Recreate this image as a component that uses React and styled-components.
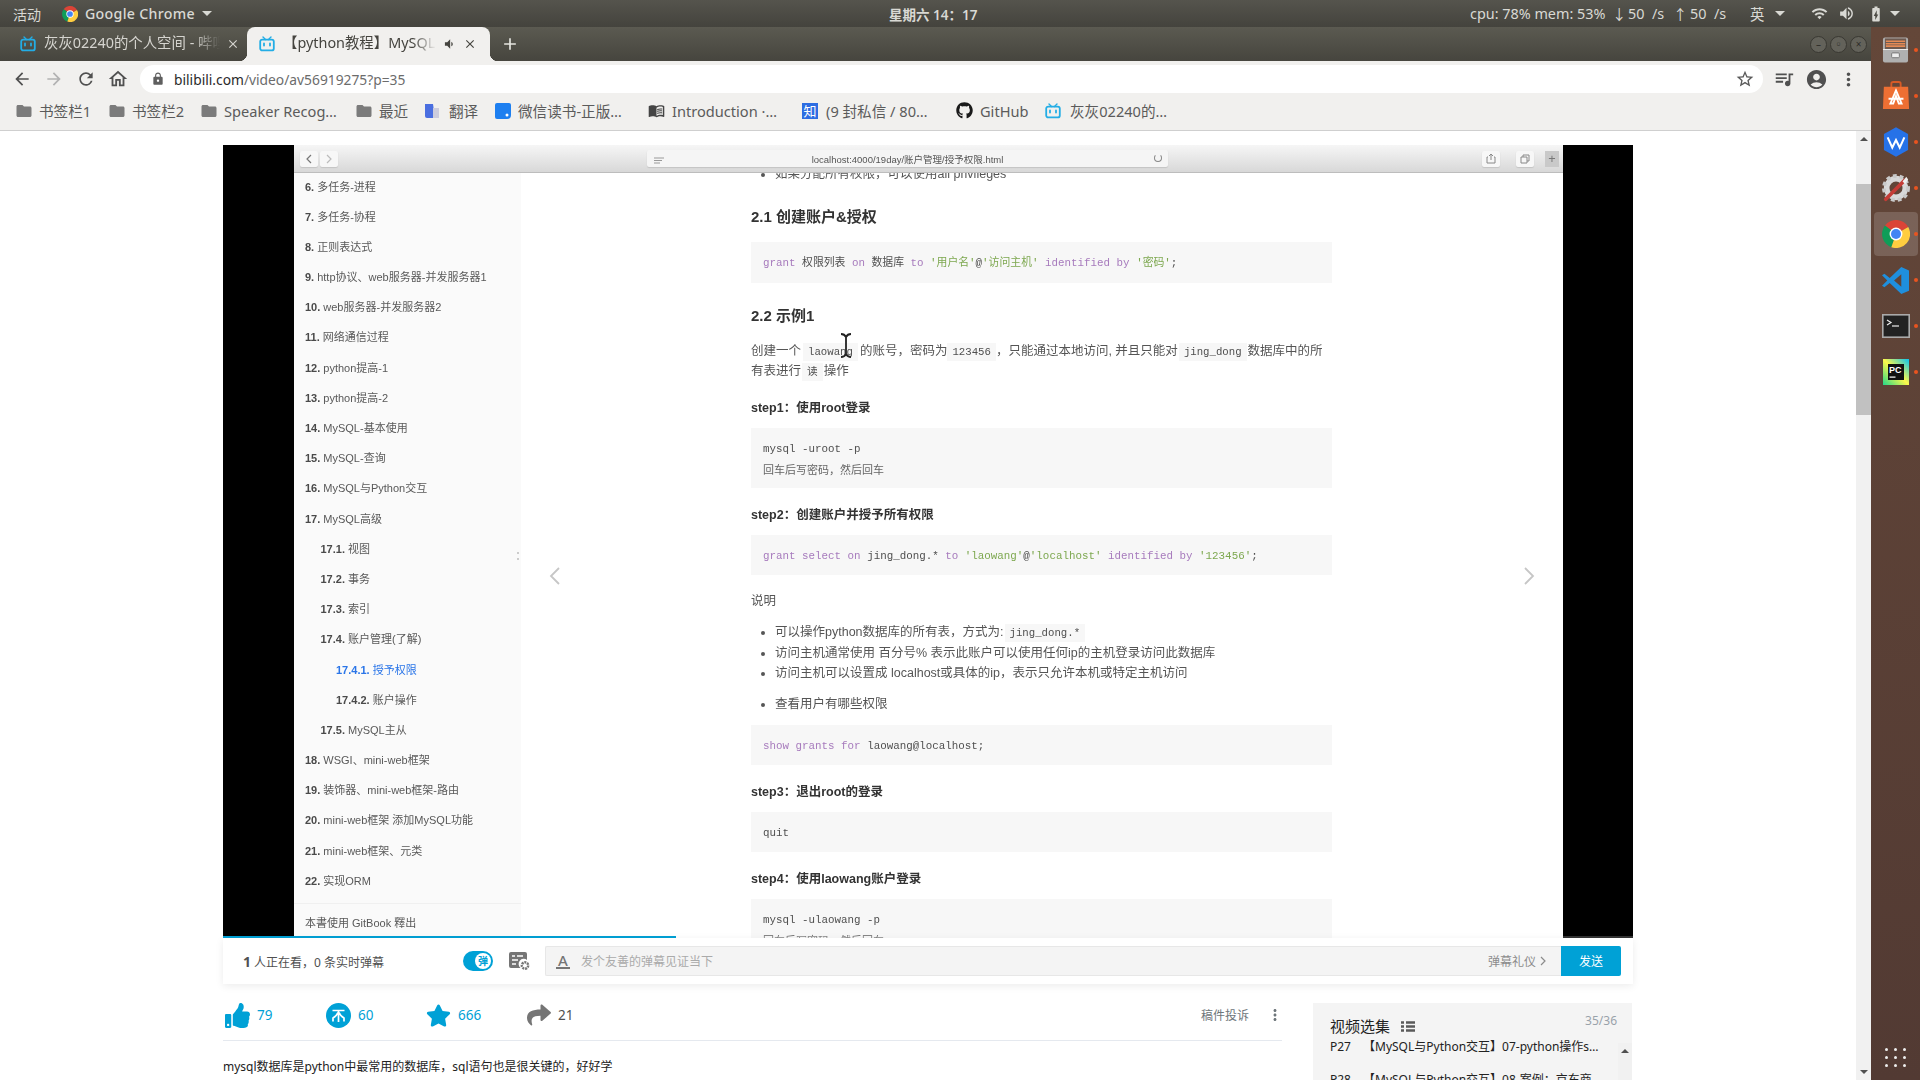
import React from 'react';
import styled, { createGlobalStyle } from 'styled-components';
import { FaThumbsUp, FaStar, FaShare, FaGithub } from 'react-icons/fa';
import { MdArrowBack, MdArrowForward, MdRefresh, MdOutlineHome, MdLock, MdStarBorder, MdQueueMusic, MdAccountCircle, MdMoreVert, MdWifi, MdVolumeUp, MdBatteryChargingFull, MdFolder, MdVolumeDown, MdClose, MdAdd, MdMenuBook } from 'react-icons/md';

const ui = '"Noto Sans", "Noto Sans CJK SC", sans-serif';
const mono = '"Liberation Mono", "Noto Sans CJK SC", monospace';
const doc = '"Liberation Sans", "Noto Sans CJK SC", sans-serif';
const blue = '#00a1d6';

const Global = createGlobalStyle`
  html, body { margin: 0; padding: 0; background: #fff; overflow: hidden; }
  * { box-sizing: border-box; }
  #root { width: 1920px; height: 1080px; }
`;

const Desktop = styled.div`width:1920px;height:1080px;display:flex;flex-direction:column;overflow:hidden;font-family:${ui};`;
const TopBar = styled.header`height:27px;flex:none;display:flex;align-items:center;background:linear-gradient(#55544d,#44433d);color:#d9d9d4;font-size:14px;padding-left:13px;`;
const Activities = styled.span`width:49px;flex:none;`;
const AppMenu = styled.div`width:827px;flex:none;display:flex;align-items:center;gap:7px;font-weight:500;letter-spacing:.3px;font-size:14.2px;`;
const Caret = styled.i`display:inline-block;width:0;height:0;border-left:5px solid transparent;border-right:5px solid transparent;border-top:5px solid #d9d9d4;`;
const Clock = styled.span`width:130px;flex:none;font-weight:600;font-size:13.5px;`;
const Tray = styled.div`margin-left:451px;flex:none;display:flex;align-items:center;white-space:pre;font-size:14.4px;width:450px;`;
const Stat = styled.span`width:${p => p.$w}px;flex:none;`;
const TrayIcon = styled.span`width:${p => p.$w}px;flex:none;display:flex;align-items:center;justify-content:flex-start;`;

const Body = styled.div`flex:1;display:flex;min-height:0;`;
const Browser = styled.div`width:1871px;flex:none;display:flex;flex-direction:column;min-height:0;`;
const TabStrip = styled.div`height:34px;flex:none;display:flex;align-items:flex-end;padding-left:15px;background:linear-gradient(#5b5a51,#46453e);position:relative;`;
const Tab = styled.div`
  position:relative;width:${p => p.$w}px;height:34px;flex:none;display:flex;align-items:center;font-size:14.4px;padding-left:${p => p.$pad}px;
  color:${p => p.$active ? '#45443f' : '#d5d4cf'};background:${p => p.$active ? '#f1f0ee' : 'transparent'};border-radius:8px 8px 0 0;white-space:nowrap;
  ${p => p.$active && `
    &::before,&::after{content:'';position:absolute;bottom:0;width:8px;height:8px;}
    &::before{left:-8px;background:radial-gradient(circle at 0 0,transparent 8px,#f1f0ee 8.5px);}
    &::after{right:-8px;background:radial-gradient(circle at 100% 0,transparent 8px,#f1f0ee 8.5px);}
  `}
`;
const TabTitle = styled.span`
  width:${p => p.$w}px;flex:none;overflow:hidden;margin-left:${p => p.$gap}px;line-height:20px;margin-bottom:2px;
  -webkit-mask-image:linear-gradient(to right,#000 85%,transparent);mask-image:linear-gradient(to right,#000 85%,transparent);
`;
const TabClose = styled(MdClose)`flex:none;margin-left:${p => p.$m}px;`;
const TabSound = styled(MdVolumeDown)`flex:none;margin-left:6px;`;
const NewTab = styled.div`margin-left:10px;height:34px;display:flex;align-items:center;color:#e5e5e0;`;
const WindowButtons = styled.div`margin-left:auto;margin-right:4px;display:flex;gap:3px;height:34px;align-items:center;`;
const WinBtn = styled.span`width:17px;height:17px;border-radius:50%;background:#63625a;border:1px solid #393832;display:flex;align-items:center;justify-content:center;color:#2e2d29;font-size:10px;line-height:1;`;

const Toolbar = styled.div`height:32px;flex:none;background:#f1f0ee;display:flex;align-items:flex-end;padding-left:6px;padding-right:10px;`;
const NavIcon = styled.span`width:32px;height:28px;flex:none;display:flex;align-items:center;justify-content:center;color:${p => p.$dim ? '#b2b2b2' : '#505050'};`;
const Omni = styled.div`margin-left:6px;width:1623px;height:28px;flex:none;background:#fff;border-radius:14px;display:flex;align-items:center;padding-left:11px;font-size:13.8px;`;
const Url = styled.span`margin-left:9px;color:#6c6c6c;white-space:nowrap;& b{font-weight:400;color:#2a2a2a;}`;
const StarIcon = styled.span`margin-left:auto;margin-right:8px;color:#5a5a5a;display:flex;`;
const RightTools = styled.div`margin-left:5px;display:flex;`;

const Bookmarks = styled.div`height:38px;flex:none;background:#f1f0ee;border-bottom:1px solid #cfcfcf;display:flex;align-items:center;padding:0 0 2px 15px;`;
const Bookmark = styled.div`width:${p => p.$w}px;flex:none;display:flex;align-items:center;gap:${p => p.$gap || 6}px;font-size:14.6px;color:#5b5b5b;white-space:nowrap;`;
const ZhiIcon = styled.span`width:16px;height:16px;background:#2d6de2;color:#fff;font-size:13px;line-height:16px;text-align:center;flex:none;`;

const Content = styled.div`flex:1;display:flex;min-height:0;background:#fff;`;
const Page = styled.main`flex:1;min-width:0;padding:14px 0 0 223px;overflow:hidden;`;
const Player = styled.section`width:1410px;`;
const Video = styled.div`height:793px;background:#000;display:flex;position:relative;padding:0 70px 0 71px;`;
const Progress = styled.div`position:absolute;left:0;right:0;bottom:0;height:2px;background:rgba(255,255,255,.2);&::after{content:'';position:absolute;left:0;top:0;bottom:0;width:453px;background:${blue};}`;
const Screen = styled.div`width:1269px;height:793px;background:#fff;display:flex;flex-direction:column;overflow:hidden;position:relative;filter:blur(.35px);`;

const MacBar = styled.div`height:28px;flex:none;background:linear-gradient(#f6f6f6,#d8d8d8);border-bottom:1px solid #bdbdbd;display:flex;align-items:center;padding-left:6px;position:relative;z-index:1;`;
const MacBtn = styled.span`width:18px;height:16px;flex:none;margin-right:2px;background:#f7f7f7;border-radius:2px;box-shadow:0 1px 1px #c4c4c4;display:flex;align-items:center;justify-content:center;color:${p => p.$c || '#777'};`;
const MacAddress = styled.div`margin-left:307px;width:521px;height:17px;flex:none;background:#f5f5f5;border-radius:2px;box-shadow:0 1px 1px #c4c4c4;display:flex;align-items:center;justify-content:center;position:relative;font:9.5px ${doc};color:#555;`;
const MacMenu = styled.span`position:absolute;left:7px;top:5px;`;
const MacReload = styled.span`position:absolute;right:6px;top:4px;width:8px;height:8px;border:1px solid #888;border-top-color:transparent;border-radius:50%;`;
const MacRight = styled.div`margin-left:314px;display:flex;gap:14px;`;
const MacPlus = styled.span`margin-left:9px;width:14px;height:16px;background:#c9c9c9;color:#777;font-size:13px;line-height:15px;text-align:center;`;

const Split = styled.div`flex:1;min-height:0;display:flex;overflow:hidden;position:relative;`;
const Side = styled.aside`width:227px;flex:none;background:#fafafa;display:flex;flex-direction:column;font:11px/30.2px ${doc};color:#585858;position:relative;`;
const SideList = styled.ul`list-style:none;margin:-1.5px 0 0;padding:0;flex:none;`;
const SideItem = styled.li`height:30.2px;white-space:nowrap;padding-left:${p => 11 + p.$level * 15.5}px;color:${p => p.$on ? '#2a75e8' : 'inherit'};& b{color:${p => p.$on ? '#2a75e8' : '#4a4a4a'};margin-right:3px;}`;
const SideFoot = styled.div`margin-top:7px;border-top:1px solid #f0f0f0;padding-left:11px;height:38px;line-height:38px;`;
const Grip = styled.span`position:absolute;left:223px;top:379px;width:2px;height:8px;border-top:2px dotted #ccc;border-bottom:2px dotted #ccc;`;

const Article = styled.article`flex:1;min-width:0;overflow:hidden;padding-left:230px;font:12.5px/20px ${doc};color:#555;position:relative;`;
const Inner = styled.div`width:581px;margin-top:-9px;`;
const H2 = styled.h2`margin:${p => p.$mt}px 0 0;font:700 15px/20px ${doc};color:#333;`;
const Strong = styled.p`margin:${p => p.$mt}px 0 0;font-weight:700;color:#333;line-height:20px;`;
const Code = styled.pre`margin:${p => p.$mt}px 0 0;background:#f7f7f7;padding:11px 12px 0;height:${p => p.$h}px;font:10.85px/20.5px ${mono};color:#4f4f4f;overflow:hidden;white-space:pre;`;
const CodeNote = styled.span`font-family:${doc};font-size:11px;color:#666;`;
const Kw = styled.span`color:#a77bbd;`;
const Str = styled.span`color:#7da84f;`;
const Para = styled.p`margin:${p => p.$mt}px 0 0;line-height:20px;`;
const Inline = styled.code`font:10.7px ${mono};background:#f7f7f7;padding:3px 5px;color:#4f4f4f;margin:0 ${p => p.$m ?? 1}px;`;
const List = styled.ul`margin:${p => p.$mt}px 0 0;padding:0 0 0 24px;line-height:20.4px;`;
const Chevron = styled.span`position:absolute;top:394px;${p => p.$flip ? 'right:28px;transform:scaleX(-1);' : 'left:28px;'}color:#c6c6c6;display:flex;`;
const Cursor = styled.svg`position:absolute;left:318px;top:160px;`;

const SendBar = styled.div`height:46px;background:#fff;box-shadow:0 2px 8px rgba(0,0,0,.08);display:flex;align-items:center;padding:0 12px 0 20px;position:relative;`;
const Watch = styled.div`width:220px;flex:none;font-size:12px;color:#505050;& b{font-size:14px;margin-right:3px;font-weight:700;}`;
const Toggle = styled.div`width:30px;height:20px;flex:none;border-radius:10px;background:${blue};display:flex;align-items:center;justify-content:flex-end;padding-right:2px;`;
const Knob = styled.span`width:16px;height:16px;border-radius:50%;background:#fff;color:${blue};font-size:10px;line-height:16px;text-align:center;font-weight:700;`;
const DmSet = styled.span`margin-left:16px;flex:none;display:flex;`;
const Input = styled.div`margin-left:15px;flex:1;height:30px;background:#f4f4f4;border:1px solid #e7e7e7;border-right:0;border-radius:2px 0 0 2px;display:flex;align-items:center;padding:0 14px 0 10px;font-size:12px;color:#aaa;`;
const FontA = styled.span`width:14px;flex:none;color:#757575;font-size:15px;line-height:14px;text-align:center;border-bottom:2px solid #757575;margin-right:11px;font-weight:500;`;
const Etiquette = styled.span`margin-left:auto;color:#8c8c8c;display:flex;align-items:center;gap:3px;`;
const Send = styled.button`width:60px;height:30px;flex:none;border:0;background:${blue};color:#fff;font:12px ${ui};border-radius:0 2px 2px 0;padding:0;`;

const Below = styled.div`display:flex;gap:31px;`;
const LeftCol = styled.div`width:1059px;flex:none;`;
const Actions = styled.div`height:57px;border-bottom:1px solid #e5e9ef;display:flex;align-items:center;padding:6px 0 0 2px;`;
const Action = styled.div`width:${p => p.$w || 100}px;flex:none;display:flex;align-items:center;gap:7px;font-size:13.5px;color:${p => p.$c};`;
const ActIcon = styled.span`width:25px;height:26px;flex:none;display:flex;align-items:center;justify-content:center;color:${p => p.$c};`;
const Report = styled.div`margin-left:auto;display:flex;align-items:center;font-size:12px;color:#6d757a;margin-right:-2px;`;
const VDots = styled.span`margin-left:17px;display:flex;color:#6d757a;`;
const Desc = styled.p`margin:17px 0 0;font-size:12px;line-height:18px;color:#222;`;
const Panel = styled.aside`width:319px;flex:none;margin-top:19px;background:#f4f4f4;height:120px;padding:12px 0 0 17px;position:relative;`;
const PanelHead = styled.div`display:flex;align-items:center;gap:11px;font-size:15px;line-height:22px;color:#222;padding-right:15px;`;
const PanelCount = styled.span`margin-left:auto;font-size:12px;color:#99a2aa;margin-top:-10px;`;
const PartList = styled.ul`list-style:none;margin:1px 0 0;padding:0;font-size:12px;color:#222;`;
const Part = styled.li`height:33px;line-height:18px;display:flex;gap:12px;white-space:nowrap;`;
const PartBar = styled.span`position:absolute;right:0;top:40px;bottom:0;width:14px;background:#f1f1f1;&::after{content:'';position:absolute;left:3px;top:6px;border-left:4px solid transparent;border-right:4px solid transparent;border-bottom:4px solid #505050;}`;

const PageScroll = styled.div`width:15px;flex:none;background:#f1f1f1;display:flex;flex-direction:column;align-items:center;position:relative;`;
const Thumb = styled.div`position:absolute;top:53px;left:0;right:0;height:231px;background:#c1c1c1;`;
const ArrowUp = styled.i`margin-top:6px;border-left:4px solid transparent;border-right:4px solid transparent;border-bottom:4px solid #505050;`;
const ArrowDown = styled.i`margin-top:auto;margin-bottom:6px;border-left:4px solid transparent;border-right:4px solid transparent;border-top:4px solid #505050;`;

const Dock = styled.nav`width:49px;flex:none;background:linear-gradient(#644739,#523a33);display:flex;flex-direction:column;align-items:center;`;
const DockSlot = styled.div`width:44px;height:${p => p.$on ? 44 : 46}px;margin:${p => p.$on ? '1px 0' : '0'};flex:none;border-radius:4px;display:flex;align-items:center;justify-content:center;position:relative;background:${p => p.$on ? 'rgba(255,255,255,.16)' : 'transparent'};&::after{content:'';position:absolute;right:0;top:50%;width:4px;height:4px;margin-top:-2px;border-radius:50%;background:#e95420;}`;
const Grid = styled.div`margin-top:auto;margin-bottom:13px;display:grid;grid-template-columns:repeat(3,3px);gap:5px 6px;`;
const GridDot = styled.i`width:3px;height:3px;border-radius:50%;background:#eee;`;

const Bili = ({ s = 16 }) => (
  <svg width={s} height={s} viewBox="0 0 16 16" fill="none" style={{ flex: 'none' }}>
    <path d="M4 1l2.5 2.5M12 1L9.5 3.5" stroke="#23ade5" strokeWidth="1.4" strokeLinecap="round" />
    <rect x="1.2" y="3.6" width="13.6" height="10.8" rx="2" stroke="#23ade5" strokeWidth="1.8" />
    <path d="M5 7.5v2M11 7.5v2" stroke="#23ade5" strokeWidth="1.8" strokeLinecap="round" />
  </svg>
);
const ChromeLogo = ({ s = 16 }) => (
  <svg width={s} height={s} viewBox="0 0 48 48" style={{ flex: 'none' }}>
    <path d="M24 24L45 12A24 24 0 0 0 5 9.5z" fill="#db4437" />
    <path d="M24 24L5 9.5A24 24 0 0 0 16 46.6z" fill="#0f9d58" />
    <path d="M24 24L16 46.6A24 24 0 0 0 45 12z" fill="#ffcd40" />
    <circle cx="24" cy="24" r="11" fill="#fff" />
    <circle cx="24" cy="24" r="8.6" fill="#4285f4" />
  </svg>
);
const Coin = () => (
  <svg width="25" height="25" viewBox="0 0 25 25"><circle cx="12.5" cy="12.5" r="12.5" fill={blue} />
    <path d="M6.5 7.5h12M12.5 8v11M12 9.5c-1 2.5-2.5 4-5 5.5v3.5M13 9.5c1 2.5 2.5 4 5 5.5v3.5" stroke="#fff" strokeWidth="1.7" fill="none" /></svg>
);
const DmIcon = () => (
  <svg width="21" height="20" viewBox="0 0 21 20"><path d="M2 1h14a2 2 0 0 1 2 2v6a5 5 0 0 0-6.500 8H2a2 2 0 0 1-2-2V3a2 2 0 0 1 2-2z" fill="#757575" />
    <path d="M3 5h3M8 5h6M3 9h6M3 13h4" stroke="#fff" strokeWidth="1.6" />
    <circle cx="16" cy="14.5" r="3.2" fill="none" stroke="#757575" strokeWidth="2.4" strokeDasharray="2 .8" /></svg>
);
const IBeam = () => (
  <Cursor width="14" height="25" viewBox="0 0 14 25"><path d="M2 1c2 0 4 1 5 3 1-2 3-3 5-3M7 4v17M2 24c2 0 4-1 5-3 1 2 3 3 5 3" stroke="#222" strokeWidth="1.8" fill="none" /></Cursor>
);
const ChevronSvg = () => (
  <svg width="12" height="18" viewBox="0 0 12 18"><path d="M10 1L2 9l8 8" stroke="currentColor" strokeWidth="1.8" fill="none" /></svg>
);
const Small = ({ d, w = 8, h = 10 }) => (
  <svg width={w} height={h} viewBox="0 0 8 10"><path d={d} stroke="currentColor" strokeWidth="1.2" fill="none" /></svg>
);

const DockFile = () => (
  <svg width="27" height="28" viewBox="0 0 28 28"><rect x="1" y="1" width="26" height="26" rx="2" fill="#b0b0b0" /><rect x="3" y="2" width="22" height="11" fill="#6e5a50" /><path d="M4 5h20M4 7.500h20M4 10h20" stroke="#e58a55" strokeWidth="1.6" /><rect x="1" y="13" width="26" height="1" fill="#eee" /><rect x="10" y="17" width="8" height="5" rx="1" fill="#eee" stroke="#777" /></svg>
);
const DockStore = () => (
  <svg width="28" height="30" viewBox="0 0 30 32"><path d="M10 7V3a2 2 0 0 1 2-2h6a2 2 0 0 1 2 2v4" stroke="#d75a26" strokeWidth="2" fill="none" /><path d="M2 6h26l1 24H1z" fill="#ee6f33" /><path d="M15 10l-6 14h3l3-8 3 8h3zM7 19h16" stroke="#fff" strokeWidth="2" fill="none" /></svg>
);
const DockWps = () => (
  <svg width="26" height="30" viewBox="0 0 28 32"><path d="M14 0l13 7.500v17L14 32 1 24.500v-17z" fill="#2672e8" /><path d="M5 11l5 11 4-8 4 8 5-11" stroke="#fff" strokeWidth="2.2" fill="none" /></svg>
);
const DockGear = () => (
  <svg width="28" height="28" viewBox="0 0 30 30"><circle cx="15" cy="15" r="10" fill="none" stroke="#d8d8d8" strokeWidth="6" /><circle cx="15" cy="15" r="13" fill="none" stroke="#c9c9c9" strokeWidth="4" strokeDasharray="4 3.2" /><path d="M4 27L24 7" stroke="#c43c36" strokeWidth="4" strokeLinecap="round" /><path d="M22 8l4-5 2 3-3 5z" fill="#eee" /></svg>
);
const DockCode = () => (
  <svg width="27" height="27" viewBox="0 0 28 28"><path d="M20 0l8 3.500v21L20 28 8 16.500 2.500 21 0 19.500 5.500 14 0 8.500 2.500 7 8 11.500zM20 7.500L12.500 14l7.500 6.500z" fill="#1f8fdd" /></svg>
);
const DockTerm = () => (
  <svg width="28" height="24" viewBox="0 0 28 24"><rect x=".8" y=".8" width="26.400" height="22.400" fill="#222" stroke="#aaa" strokeWidth="1.600" /><path d="M5 6l4 2.500L5 11" stroke="#eee" strokeWidth="1.200" fill="none" /><path d="M10 12h7" stroke="#eee" strokeWidth="1.200" /></svg>
);
const DockPc = () => (
  <svg width="26" height="26" viewBox="0 0 26 26"><defs><linearGradient id="pc" x1="0" y1="1" x2="1" y2="0"><stop offset="0" stopColor="#21d789" /><stop offset=".5" stopColor="#fcf84a" /><stop offset="1" stopColor="#07c3f2" /></linearGradient></defs><rect width="26" height="26" fill="url(#pc)" /><rect x="5" y="5" width="16" height="16" fill="#111" /><text x="6" y="14" fill="#fff" fontSize="9" fontWeight="700" fontFamily="Liberation Sans">PC</text><rect x="6.500" y="17.500" width="6" height="1.200" fill="#fff" /></svg>
);

const bookmarks = [
  { w: 93, icon: <MdFolder size={18} color="#7b7b7b" />, t: '书签栏1' },
  { w: 92, icon: <MdFolder size={18} color="#7b7b7b" />, t: '书签栏2' },
  { w: 155, icon: <MdFolder size={18} color="#7b7b7b" />, t: 'Speaker Recog…' },
  { w: 69, icon: <MdFolder size={18} color="#7b7b7b" />, t: '最近' },
  { w: 71, icon: <svg width="16" height="16" viewBox="0 0 16 16"><path d="M1 1h8l2 14H3a2 2 0 0 1-2-2z" fill="#4a6ee0" /><path d="M9 5h6v10H9z" fill="#ccd" /></svg>, t: '翻译', gap: 9 },
  { w: 153, icon: <svg width="16" height="16" viewBox="0 0 16 16"><path d="M2 0h12a2 2 0 0 1 2 2v10a4 4 0 0 1-4 4H2a2 2 0 0 1-2-2V2a2 2 0 0 1 2-2z" fill="#1d7ff0" /><circle cx="12" cy="12" r="1.500" fill="#fff" /></svg>, t: '微信读书-正版…', gap: 7 },
  { w: 154, icon: <MdMenuBook size={17} color="#444" />, t: 'Introduction ·…', gap: 7 },
  { w: 154, icon: <ZhiIcon>知</ZhiIcon>, t: '(9 封私信 / 80…', gap: 8 },
  { w: 89, icon: <FaGithub size={17} color="#1a1a1a" />, t: 'GitHub', gap: 7 },
  { w: 140, icon: <Bili />, t: '灰灰02240的…', gap: 9 },
];

const toc = [
  [0, '6.', '多任务-进程'], [0, '7.', '多任务-协程'], [0, '8.', '正则表达式'], [0, '9.', 'http协议、web服务器-并发服务器1'],
  [0, '10.', 'web服务器-并发服务器2'], [0, '11.', '网络通信过程'], [0, '12.', 'python提高-1'], [0, '13.', 'python提高-2'],
  [0, '14.', 'MySQL-基本使用'], [0, '15.', 'MySQL-查询'], [0, '16.', 'MySQL与Python交互'], [0, '17.', 'MySQL高级'],
  [1, '17.1.', '视图'], [1, '17.2.', '事务'], [1, '17.3.', '索引'], [1, '17.4.', '账户管理(了解)'],
  [2, '17.4.1.', '授予权限', true], [2, '17.4.2.', '账户操作'], [1, '17.5.', 'MySQL主从'],
  [0, '18.', 'WSGI、mini-web框架'], [0, '19.', '装饰器、mini-web框架-路由'], [0, '20.', 'mini-web框架 添加MySQL功能'],
  [0, '21.', 'mini-web框架、元类'], [0, '22.', '实现ORM'],
];

export default function App() {
  return (
    <Desktop>
      <Global />
      <TopBar>
        <Activities>活动</Activities>
        <AppMenu><ChromeLogo /><span>Google Chrome</span><Caret /></AppMenu>
        <Clock>星期六 14：17</Clock>
        <Tray>
          <Stat $w={142}>cpu: 78% mem: 53%</Stat>
          <Stat $w={16}>↓</Stat><Stat $w={24}>50</Stat><Stat $w={21}>/s</Stat>
          <Stat $w={17}>↑</Stat><Stat $w={24}>50</Stat><Stat $w={36}>/s</Stat>
          <Stat $w={25}>英</Stat>
          <TrayIcon $w={36}><Caret /></TrayIcon>
          <TrayIcon $w={27}><MdWifi size={17} /></TrayIcon>
          <TrayIcon $w={29}><MdVolumeUp size={17} /></TrayIcon>
          <TrayIcon $w={23}><MdBatteryChargingFull size={18} /></TrayIcon>
          <TrayIcon $w={12}><Caret /></TrayIcon>
        </Tray>
      </TopBar>
      <Body>
        <Browser>
          <TabStrip>
            <Tab $w={232} $pad={5}>
              <Bili /><TabTitle $w={176} $gap={8}>灰灰02240的个人空间 - 哔哩哔哩</TabTitle>
              <TabClose size={14} $m={6} />
            </Tab>
            <Tab $w={243} $pad={12} $active>
              <Bili /><TabTitle $w={153} $gap={8}>【python教程】MySQL高级-账户管理</TabTitle>
              <TabSound size={14} />
              <TabClose size={14} $m={7} />
            </Tab>
            <NewTab><MdAdd size={20} /></NewTab>
            <WindowButtons><WinBtn>–</WinBtn><WinBtn>▫</WinBtn><WinBtn>×</WinBtn></WindowButtons>
          </TabStrip>
          <Toolbar>
            <NavIcon><MdArrowBack size={20} /></NavIcon>
            <NavIcon $dim><MdArrowForward size={20} /></NavIcon>
            <NavIcon><MdRefresh size={20} /></NavIcon>
            <NavIcon><MdOutlineHome size={22} /></NavIcon>
            <Omni>
              <MdLock size={14} color="#5f5f5f" />
              <Url><b>bilibili.com</b>/video/av56919275?p=35</Url>
              <StarIcon><MdStarBorder size={20} /></StarIcon>
            </Omni>
            <RightTools>
              <NavIcon><MdQueueMusic size={22} /></NavIcon>
              <NavIcon><MdAccountCircle size={23} /></NavIcon>
              <NavIcon><MdMoreVert size={21} /></NavIcon>
            </RightTools>
          </Toolbar>
          <Bookmarks>
            {bookmarks.map(b => <Bookmark key={b.t} $w={b.w} $gap={b.gap}>{b.icon}<span>{b.t}</span></Bookmark>)}
          </Bookmarks>
          <Content>
            <Page>
              <Player>
                <Video>
                  <Screen>
                    <MacBar>
                      <MacBtn><Small d="M6 1L2 5l4 4" /></MacBtn>
                      <MacBtn $c="#bbb"><Small d="M2 1l4 4-4 4" /></MacBtn>
                      <MacAddress>
                        <MacMenu><svg width="12" height="7" viewBox="0 0 12 7"><path d="M0 1h10M0 3.500h8M0 6h6" stroke="#999" /></svg></MacMenu>
                        localhost:4000/19day/账户管理/授予权限.html
                        <MacReload />
                      </MacAddress>
                      <MacRight>
                        <MacBtn><svg width="10" height="11" viewBox="0 0 10 11"><path d="M2 4H1v6h8V4H8M5 7V1M3 3l2-2 2 2" stroke="#888" fill="none" /></svg></MacBtn>
                        <MacBtn><svg width="10" height="10" viewBox="0 0 10 10"><path d="M1 3h6v6H1zM3 3V1h6v6H7" stroke="#888" fill="none" /></svg></MacBtn>
                      </MacRight>
                      <MacPlus>+</MacPlus>
                    </MacBar>
                    <Split>
                      <Side>
                        <SideList>
                          {toc.map(([l, n, t, on]) => <SideItem key={n} $level={l} $on={on}><b>{n}</b>{t}</SideItem>)}
                        </SideList>
                        <SideFoot>本書使用 GitBook 釋出</SideFoot>
                        <Grip />
                      </Side>
                      <Article>
                        <Inner>
                          <List $mt={0}><li>如果分配所有权限，可以使用all privileges</li></List>
                          <H2 $mt={23}>2.1 创建账户&amp;授权</H2>
                          <Code $mt={15} $h={41}><Kw>grant</Kw> 权限列表 <Kw>on</Kw> 数据库 <Kw>to</Kw> <Str>'用户名'</Str>@<Str>'访问主机'</Str> <Kw>identified by</Kw> <Str>'密码'</Str>;</Code>
                          <H2 $mt={23}>2.2 示例1</H2>
                          <Para $mt={15}>创建一个<Inline $m={2}>laowang</Inline>的账号，密码为<Inline $m={0}>123456</Inline>，只能通过本地访问, 并且只能对<Inline $m={1}>jing_dong</Inline>数据库中的所有表进行<Inline>读</Inline>操作</Para>
                          <Strong $mt={17}>step1：使用root登录</Strong>
                          <Code $mt={10} $h={60}>{'mysql -uroot -p\n'}<CodeNote>回车后写密码，然后回车</CodeNote></Code>
                          <Strong $mt={17}>step2：创建账户并授予所有权限</Strong>
                          <Code $mt={10} $h={40}><Kw>grant select on</Kw> jing_dong.* <Kw>to</Kw> <Str>'laowang'</Str>@<Str>'localhost'</Str> <Kw>identified by</Kw> <Str>'123456'</Str>;</Code>
                          <Para $mt={16}>说明</Para>
                          <List $mt={11}>
                            <li>可以操作python数据库的所有表，方式为:<Inline>jing_dong.*</Inline></li>
                            <li>访问主机通常使用 百分号% 表示此账户可以使用任何ip的主机登录访问此数据库</li>
                            <li>访问主机可以设置成 localhost或具体的ip，表示只允许本机或特定主机访问</li>
                          </List>
                          <List $mt={10}><li>查看用户有哪些权限</li></List>
                          <Code $mt={11} $h={40}><Kw>show grants for</Kw> laowang@localhost;</Code>
                          <Strong $mt={17}>step3：退出root的登录</Strong>
                          <Code $mt={10} $h={40}>quit</Code>
                          <Strong $mt={17}>step4：使用laowang账户登录</Strong>
                          <Code $mt={10} $h={60}>{'mysql -ulaowang -p\n'}<CodeNote>回车后写密码，然后回车</CodeNote></Code>
                        </Inner>
                        <Chevron><ChevronSvg /></Chevron>
                        <Chevron $flip><ChevronSvg /></Chevron>
                        <IBeam />
                      </Article>
                    </Split>
                  </Screen>
                  <Progress />
                </Video>
                <SendBar>
                  <Watch><b>1</b>人正在看，0 条实时弹幕</Watch>
                  <Toggle><Knob>弹</Knob></Toggle>
                  <DmSet><DmIcon /></DmSet>
                  <Input>
                    <FontA>A</FontA>发个友善的弹幕见证当下
                    <Etiquette>弹幕礼仪<Small d="M2 1l4 4-4 4" /></Etiquette>
                  </Input>
                  <Send>发送</Send>
                </SendBar>
              </Player>
              <Below>
                <LeftCol>
                  <Actions>
                    <Action $c={blue} $w={101}><ActIcon $c={blue}><FaThumbsUp size={25} /></ActIcon>79</Action>
                    <Action $c={blue} $w={100}><ActIcon><Coin /></ActIcon>60</Action>
                    <Action $c={blue} $w={100}><ActIcon $c={blue}><FaStar size={25} /></ActIcon>666</Action>
                    <Action $c="#505050"><ActIcon $c="#757575"><FaShare size={24} /></ActIcon>21</Action>
                    <Report>稿件投诉<VDots><MdMoreVert size={18} /></VDots></Report>
                  </Actions>
                  <Desc>mysql数据库是python中最常用的数据库，sql语句也是很关键的，好好学</Desc>
                </LeftCol>
                <Panel>
                  <PanelHead>视频选集
                    <svg width="14" height="11" viewBox="0 0 14 11"><path d="M0 1.500h3M5 1.500h9M0 5.500h3M5 5.500h9M0 9.500h3M5 9.500h9" stroke="#5a5a5a" strokeWidth="2.400" /></svg>
                    <PanelCount>35/36</PanelCount>
                  </PanelHead>
                  <PartList>
                    <Part><span>P27</span><span>【MySQL与Python交互】07-python操作s…</span></Part>
                    <Part><span>P28</span><span>【MySQL与Python交互】08-案例：京东商</span></Part>
                  </PartList>
                  <PartBar />
                </Panel>
              </Below>
            </Page>
            <PageScroll><ArrowUp /><Thumb /><ArrowDown /></PageScroll>
          </Content>
        </Browser>
        <Dock>
          <DockSlot><DockFile /></DockSlot>
          <DockSlot><DockStore /></DockSlot>
          <DockSlot><DockWps /></DockSlot>
          <DockSlot><DockGear /></DockSlot>
          <DockSlot $on><ChromeLogo s={28} /></DockSlot>
          <DockSlot><DockCode /></DockSlot>
          <DockSlot><DockTerm /></DockSlot>
          <DockSlot><DockPc /></DockSlot>
          <Grid>{Array.from({ length: 9 }, (_, i) => <GridDot key={i} />)}</Grid>
        </Dock>
      </Body>
    </Desktop>
  );
}
